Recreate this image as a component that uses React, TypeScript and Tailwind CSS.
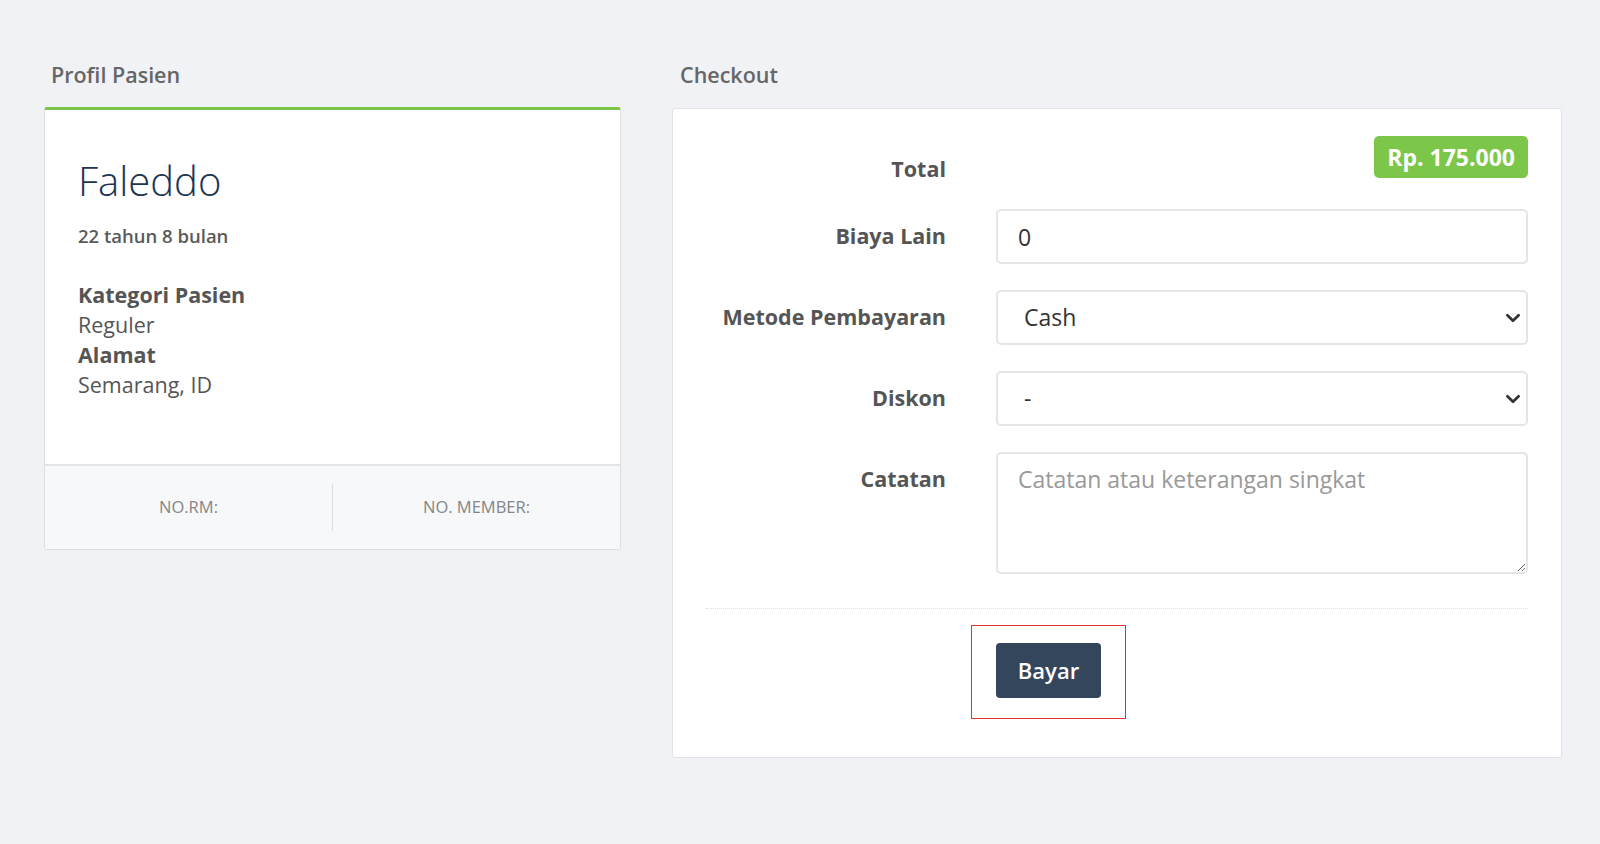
import React from "react";

const FONT = { fontFamily: '"Open Sans", "Noto Sans", Arial, sans-serif' };

const Chevron = () => (
    <svg
        className="pointer-events-none absolute right-[6px] top-1/2 -translate-y-1/2"
        width="18"
        height="18"
        viewBox="0 0 16 16"
        fill="none"
    >
        <path d="M3 5.5l5 5 5-5" stroke="#333" strokeWidth="2.4" strokeLinecap="round" strokeLinejoin="round" />
    </svg>
);

const Row = ({ label, children, labelPad = "pt-[13px]" }: { label: string; children: React.ReactNode; labelPad?: string }) => (
    <div className="flex items-start">
        <div className={`w-[240px] shrink-0 text-right text-[21.5px] font-bold leading-[28px] text-[#555] ${labelPad}`}>{label}</div>
        <div className="ml-[50px] flex-1">{children}</div>
    </div>
);

export default function App() {
    return (
        <div className="min-h-[844px] w-full bg-[#f1f2f6] pl-[44px] pr-[38px] pt-[60px]" style={FONT}>
            <div className="flex items-start gap-[51px]">
                {/* Profil Pasien */}
                <div className="w-[577px] shrink-0">
                    <h2 className="px-[7px] text-[21.5px] font-semibold leading-[30px] text-[#666]">Profil Pasien</h2>
                    <div className="mt-[17px] rounded-[3px] border border-[#dcdde0] border-t-[3px] border-t-[#7cc64a] bg-white">
                        <div className="px-[33px] pb-[64px] pt-[45px]">
                            <div className="text-[40px] font-light leading-[52px] text-[#1d3452]">Faleddo</div>
                            <div className="mt-[17px] text-[18.5px] font-semibold leading-[24px] text-[#5a5a5a]">22 tahun 8 bulan</div>
                            <div className="mt-[32px] text-[21.5px] leading-[30px] text-[#555]">
                                <div className="font-bold">Kategori Pasien</div>
                                <div>Reguler</div>
                                <div className="font-bold">Alamat</div>
                                <div>Semarang, ID</div>
                            </div>
                        </div>
                        <div className="flex h-[85px] items-center border-t-2 border-[#e3e4e8] bg-[#f7f8fa] text-[16.5px] uppercase text-[#858585]">
                            <div className="flex-1 text-center">NO.RM:</div>
                            <div className="h-[47px] w-px bg-[#dcdde0]" />
                            <div className="flex-1 text-center">NO. MEMBER:</div>
                        </div>
                    </div>
                </div>

                {/* Checkout */}
                <div className="flex-1">
                    <h2 className="px-[8px] text-[21.5px] font-semibold leading-[30px] text-[#666]">Checkout</h2>
                    <div className="mt-[18px] rounded-[3px] border border-[#e1e2e6] bg-white px-[33px] pb-[38px] pt-[27px]">
                        <div className="flex flex-col gap-[26px]">
                            <Row label="Total" labelPad="pt-[19px]">
                                <div className="flex justify-end">
                                    <span className="rounded-[5px] bg-[#7cc64a] px-[13px] py-[6px] text-[23px] font-bold leading-[30px] text-white">
                                        Rp. 175.000
                                    </span>
                                </div>
                            </Row>
                            <Row label="Biaya Lain">
                                <input
                                    defaultValue="0"
                                    className="h-[55px] w-full rounded-[5px] border-2 border-[#e4e5e8] px-[20px] text-[23px] text-[#333] outline-none"
                                    style={FONT}
                                />
                            </Row>
                            <Row label="Metode Pembayaran">
                                <div className="relative">
                                    <select
                                        defaultValue="Cash"
                                        className="h-[55px] w-full appearance-none rounded-[5px] border-2 border-[#e4e5e8] bg-white px-[26px] text-[23px] text-[#333] outline-none"
                                        style={FONT}
                                    >
                                        <option>Cash</option>
                                        <option>Transfer</option>
                                    </select>
                                    <Chevron />
                                </div>
                            </Row>
                            <Row label="Diskon">
                                <div className="relative">
                                    <select
                                        defaultValue="-"
                                        className="h-[55px] w-full appearance-none rounded-[5px] border-2 border-[#e4e5e8] bg-white px-[26px] text-[23px] text-[#333] outline-none"
                                        style={FONT}
                                    >
                                        <option>-</option>
                                    </select>
                                    <Chevron />
                                </div>
                            </Row>
                            <Row label="Catatan">
                                <textarea
                                    placeholder="Catatan atau keterangan singkat"
                                    className="block h-[122px] w-full rounded-[5px] border-2 border-[#e4e5e8] px-[20px] pt-[10px] text-[23px] leading-[30px] text-[#333] outline-none placeholder:text-[#999]"
                                    style={FONT}
                                />
                            </Row>
                        </div>
                        <div className="mt-[34px] border-t border-dotted border-[#dedede]" />
                        <div className="mt-[16px] flex">
                            <div className="ml-[265px] border border-[#e03030] px-[24px] pb-[20px] pt-[17px]">
                                <button
                                    className="h-[55px] w-[105px] rounded-[4px] bg-[#34465c] text-[22px] font-semibold text-white"
                                    style={FONT}
                                >
                                    Bayar
                                </button>
                            </div>
                        </div>
                    </div>
                </div>
            </div>
        </div>
    );
}
